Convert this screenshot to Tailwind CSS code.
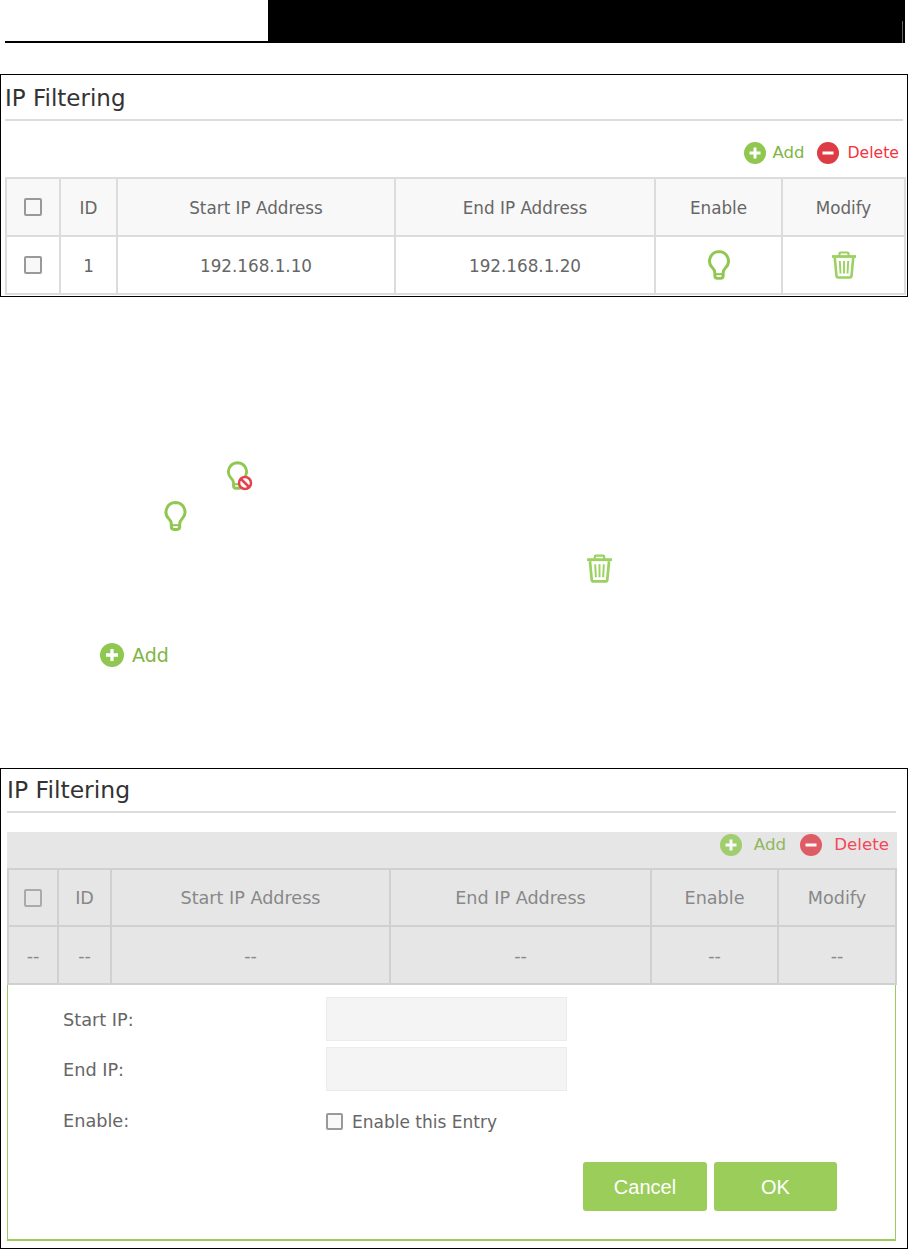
<!DOCTYPE html>
<html lang="en">
  <head>
    <meta charset="UTF-8" />
    <title>IP Filtering</title>
    <script src="https://cdn.jsdelivr.net/npm/@tailwindcss/browser@4"></script>
  </head>
  <body class="bg-white w-[909px] h-[1249px] overflow-hidden font-['DejaVu_Sans',sans-serif] text-[#666]">
    <svg class="hidden">
      <symbol id="bulb" viewBox="1.500 1 21 28.500">
        <path d="M12 2.500a9 9 0 0 0-6.300 15.400c1.600 1.600 2.300 3 2.300 4.600v3a2.500 2.500 0 0 0 2.500 2.500h3a2.500 2.500 0 0 0 2.500-2.500v-3c0-1.600.7-3 2.300-4.600a9 9 0 0 0-6.300-15.400z" fill="none" stroke="#8fc751" stroke-width="2.800" />
        <path d="M8.500 24h7" stroke="#8fc751" stroke-width="2" />
      </symbol>
      <symbol id="trash" viewBox="0 0 26 28">
        <path d="M8.500 4.500V2.500a1 1 0 0 1 1-1h7a1 1 0 0 1 1 1v2" fill="none" stroke="#9ad160" stroke-width="2.200" />
        <path d="M1 5.500h24" stroke="#9ad160" stroke-width="2.800" />
        <path d="M3.800 7l1.700 18a1.500 1.500 0 0 0 1.500 1.500h12a1.500 1.500 0 0 0 1.500-1.500L22.200 7" fill="none" stroke="#9ad160" stroke-width="2.600" />
        <path d="M8.800 10l.7 12.500M13 10v12.500M17.200 10l-.7 12.500" stroke="#9ad160" stroke-width="1.900" />
      </symbol>
      <symbol id="plus" viewBox="0 0 22 22">
        <circle cx="11" cy="11" r="11" fill="#8fc751" />
        <path d="M11 5.500v11M5.500 11h11" stroke="#fff" stroke-width="3" />
      </symbol>
      <symbol id="minus" viewBox="0 0 22 22">
        <circle cx="11" cy="11" r="11" fill="#dd3c44" />
        <path d="M5.500 11h11" stroke="#fff" stroke-width="3" />
      </symbol>
    </svg>

    <!-- Page header -->
    <header class="flex h-[43px] ml-[5px] mr-[4px]">
      <div class="w-[263px] border-b-2 border-black"></div>
      <div class="flex-1 bg-black flex justify-end items-end pr-[2px]">
        <div class="w-px h-[22px] bg-[#666]"></div>
      </div>
    </header>

    <!-- Table figure -->
    <section class="mt-[31px] h-[223px] w-[908px] border border-black px-[4px]">
      <h2 class="h-[46px] pt-[8px] text-[23px] leading-[30px] text-[#333] border-b-2 border-[#dcdcdc]">IP Filtering</h2>
      <div class="h-[56px] flex items-center justify-end pr-[4px] pt-[8px] text-[16px]">
        <svg class="w-[22px] h-[22px]"><use href="#plus" /></svg>
        <span class="ml-[7px] text-[16.500px] text-[#7fb544]">Add</span>
        <svg class="ml-[13px] w-[22px] h-[22px]"><use href="#minus" /></svg>
        <span class="ml-[8px] text-[15.700px] text-[#f5333f]">Delete</span>
      </div>
      <table class="table-fixed border-collapse w-[899px] text-[16.800px] text-center">
        <colgroup>
          <col class="w-[54px]" /><col class="w-[57px]" /><col class="w-[278px]" /><col class="w-[260px]" /><col class="w-[127px]" /><col class="w-[123px]" />
        </colgroup>
        <tr class="h-[58px] bg-[#f8f8f8]">
          <td class="border-2 border-[#dcdcdc]"><span class="block mx-auto w-[18px] h-[18px] border-2 border-[#999] bg-[#f8f8f8] rounded-[2px]"></span></td>
          <td class="border-2 border-[#dcdcdc] pt-[3px]">ID</td>
          <td class="border-2 border-[#dcdcdc] pt-[3px]">Start IP Address</td>
          <td class="border-2 border-[#dcdcdc] pt-[3px]">End IP Address</td>
          <td class="border-2 border-[#dcdcdc] pt-[3px]">Enable</td>
          <td class="border-2 border-[#dcdcdc] pt-[3px]">Modify</td>
        </tr>
        <tr class="h-[58px]">
          <td class="border-2 border-[#dcdcdc]"><span class="block mx-auto w-[18px] h-[18px] border-2 border-[#999] bg-[#f8f8f8] rounded-[2px]"></span></td>
          <td class="border-2 border-[#dcdcdc] pt-[3px]">1</td>
          <td class="border-2 border-[#dcdcdc] pt-[3px]">192.168.1.10</td>
          <td class="border-2 border-[#dcdcdc] pt-[3px]">192.168.1.20</td>
          <td class="border-2 border-[#dcdcdc]"><svg class="mx-auto w-[22px] h-[30px]"><use href="#bulb" /></svg></td>
          <td class="border-2 border-[#dcdcdc]"><svg class="mx-auto w-[26px] h-[28px]"><use href="#trash" /></svg></td>
        </tr>
      </table>
    </section>

    <!-- Icons left over from the body text -->
    <div class="h-[471px] pt-[165px]">
      <div class="h-[28px] ml-[227px] relative w-[26px] -mt-[1px]">
        <svg class="w-[21px] h-[29px]"><use href="#bulb" /></svg>
        <svg class="absolute left-[10px] top-[14px] w-[16px] h-[16px]" viewBox="0 0 16 16">
          <circle cx="8" cy="8" r="6" fill="#fff" stroke="#e4434c" stroke-width="2.500" />
          <path d="M4 4l8 8" stroke="#e4434c" stroke-width="2.500" />
        </svg>
      </div>
      <svg class="block mt-[12px] ml-[164px] w-[23px] h-[30px]"><use href="#bulb" /></svg>
      <svg class="block mt-[23px] ml-[586px] w-[27px] h-[29px]"><use href="#trash" /></svg>
      <div class="mt-[58px] ml-[100px] flex items-center text-[19px] text-[#7fb544]">
        <svg class="w-[24px] h-[24px]"><use href="#plus" /></svg>
        <span class="ml-[8px]">Add</span>
      </div>
    </div>

    <!-- Form figure -->
    <section class="h-[481px] w-[908px] border border-black px-[6px]">
      <h2 class="h-[44px] pt-[6px] text-[23.500px] leading-[30px] text-[#333] border-b-2 border-[#dcdcdc] w-[889px]">IP Filtering</h2>
      <div class="mt-[19px] w-[890px] h-[36px] bg-[#e6e6e6] flex items-center justify-end pr-[8px] pb-[10px] text-[16.700px]">
        <svg class="w-[22px] h-[22px] opacity-80"><use href="#plus" /></svg>
        <span class="ml-[12px] text-[#8fb75e]">Add</span>
        <svg class="ml-[14px] w-[22px] h-[22px] opacity-80"><use href="#minus" /></svg>
        <span class="ml-[12px] text-[#f4475a]">Delete</span>
      </div>
      <table class="table-fixed border-collapse w-[889px] bg-[#e6e6e6] text-[17.600px] text-center text-[#888]">
        <colgroup>
          <col class="w-[50px]" /><col class="w-[53px]" /><col class="w-[279px]" /><col class="w-[261px]" /><col class="w-[127px]" /><col class="w-[118px]" />
        </colgroup>
        <tr class="h-[57px]">
          <td class="border-2 border-[#d0d0d0]"><span class="block mx-auto w-[18px] h-[18px] border-2 border-[#aaa] bg-[#e6e6e6] rounded-[2px]"></span></td>
          <td class="border-2 border-[#d0d0d0] pt-[2px]">ID</td>
          <td class="border-2 border-[#d0d0d0] pt-[2px]">Start IP Address</td>
          <td class="border-2 border-[#d0d0d0] pt-[2px]">End IP Address</td>
          <td class="border-2 border-[#d0d0d0] pt-[2px]">Enable</td>
          <td class="border-2 border-[#d0d0d0] pt-[2px]">Modify</td>
        </tr>
        <tr class="h-[58px]">
          <td class="border-2 border-[#d0d0d0] pt-[3px]">--</td>
          <td class="border-2 border-[#d0d0d0] pt-[3px]">--</td>
          <td class="border-2 border-[#d0d0d0] pt-[3px]">--</td>
          <td class="border-2 border-[#d0d0d0] pt-[3px]">--</td>
          <td class="border-2 border-[#d0d0d0] pt-[3px]">--</td>
          <td class="border-2 border-[#d0d0d0] pt-[3px]">--</td>
        </tr>
      </table>
      <div class="w-[889px] h-[256px] border-x border-b-2 border-[#9ccc5e] pt-[12px] text-[17.700px]">
        <div class="flex items-center h-[44px] pl-[55px]">
          <span class="w-[263px] mt-[3px]">Start IP:</span>
          <span class="w-[241px] h-[44px] bg-[#f4f4f4] border border-[#ebebeb]"></span>
        </div>
        <div class="flex items-center h-[44px] mt-[6px] pl-[55px]">
          <span class="w-[263px] mt-[3px]">End IP:</span>
          <span class="w-[241px] h-[44px] bg-[#f4f4f4] border border-[#ebebeb]"></span>
        </div>
        <div class="flex items-center h-[30px] mt-[15px] pl-[55px]">
          <span class="w-[263px]">Enable:</span>
          <span class="w-[17px] h-[17px] border-2 border-[#999] bg-[#f8f8f8] rounded-[2px]"></span>
          <span class="ml-[9px] mt-[3px] text-[17px]">Enable this Entry</span>
        </div>
        <div class="flex justify-end gap-[7px] mt-[26px] pr-[58px]">
          <button class="w-[124px] h-[49px] bg-[#9acd5a] rounded-[3px] text-white text-[20px] font-['Liberation_Sans',sans-serif]">Cancel</button>
          <button class="w-[123px] h-[49px] bg-[#9acd5a] rounded-[3px] text-white text-[20px] font-['Liberation_Sans',sans-serif]">OK</button>
        </div>
      </div>
    </section>
  </body>
</html>
